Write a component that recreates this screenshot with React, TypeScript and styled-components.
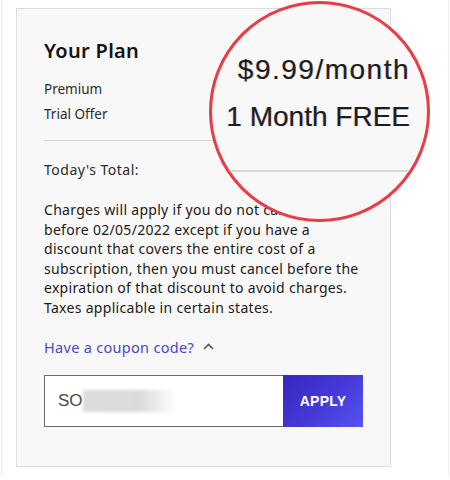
import React from "react";
import styled, { createGlobalStyle } from "styled-components";

const Global = createGlobalStyle`
  html, body { margin: 0; padding: 0; background: #ffffff; }
  body { font-family: "Noto Sans", "Lato", sans-serif; }
  * { box-sizing: border-box; }
`;

const Frame = styled.div`
  position: relative;
  margin-left: 1px;
  width: 448px;
  height: 476px;
  border-left: 1px solid #ececec;
  border-right: 1px solid #ececec;
  padding: 8px 0 0 14px;
`;

const Card = styled.section`
  width: 375px;
  height: 459px;
  background: #f8f8f8;
  border: 1px solid #dcdcdc;
  padding: 30px 27px 0 27px;
  display: flex;
  flex-direction: column;
  color: #1e1e1e;
`;

const Title = styled.h2`
  margin: 0;
  font-size: 20px;
  line-height: 24px;
  font-weight: 600;
  letter-spacing: 0.3px;
  color: #141414;
`;

const PlanList = styled.div`
  margin-top: 14px;
  display: flex;
  flex-direction: column;
`;

const PlanItem = styled.div`
  font-size: 13.5px;
  line-height: 25px;
  color: #2a2a2a;
`;

const Divider = styled.hr`
  margin: 13px 0 0 0;
  border: none;
  border-top: 1px solid #d6d6d6;
  width: 100%;
`;

const Total = styled.div`
  margin-top: 19px;
  font-size: 14px;
  letter-spacing: 0.5px;
  line-height: 20px;
  color: #2a2a2a;
`;

const Terms = styled.p`
  margin: 20px 0 0 0;
  font-size: 14px;
  letter-spacing: 0.3px;
  line-height: 19.6px;
  color: #1a1a1a;
  white-space: nowrap;
`;

const CouponToggle = styled.button`
  margin-top: 19px;
  align-self: flex-start;
  background: none;
  border: none;
  padding: 0;
  font-family: inherit;
  font-size: 14.5px;
  letter-spacing: 0.3px;
  line-height: 20px;
  color: #4a46c8;
  display: flex;
  align-items: center;
  gap: 9px;
  cursor: pointer;
`;

const CouponRow = styled.div`
  margin-top: 18px;
  display: flex;
  height: 52px;
`;

const CouponInput = styled.div`
  flex: 1;
  background: #ffffff;
  border: 1px solid #6b6b6b;
  border-right: none;
  display: flex;
  align-items: center;
  padding-left: 13px;
  font-family: "Liberation Sans", Arial, sans-serif;
  font-size: 17px;
  color: #4a4a4a;
`;

const Redacted = styled.span`
  display: inline-block;
  width: 94px;
  height: 22px;
  background: linear-gradient(90deg, #dcdcdc 0%, #dadada 60%, #ffffff 100%);
  filter: blur(1.5px);
`;

const ApplyButton = styled.button`
  width: 80px;
  border: none;
  background: linear-gradient(135deg, #3826c0 0%, #4438d6 50%, #5654f2 100%);
  color: #ffffff;
  font-family: "Liberation Sans", Arial, sans-serif;
  font-weight: 700;
  font-size: 14px;
  letter-spacing: 0.2px;
  cursor: pointer;
`;

const Magnifier = styled.div`
  position: absolute;
  left: 207px;
  top: 1px;
  width: 221px;
  height: 221px;
  border-radius: 50%;
  border: 3px solid #ec3b44;
  background: #f8f8f8;
  overflow: hidden;
  display: flex;
  flex-direction: column;
  align-items: flex-end;
  padding: 50px 17px 0 0;
  font-family: "Liberation Sans", Arial, sans-serif;
  color: #1c1c22;
  text-shadow: -0.6px 0 0 rgba(200, 150, 40, 0.35), 0.6px 0 0 rgba(60, 60, 200, 0.35);
`;

const ZoomLine = styled.div<{ $gap: number; $spacing?: number }>`
  margin-top: ${(p) => p.$gap}px;
  font-size: 28px;
  line-height: 32px;
  letter-spacing: ${(p) => p.$spacing ?? 0}px;
  white-space: nowrap;
`;

const ZoomRule = styled.div`
  margin-top: 37px;
  align-self: stretch;
  margin-right: -17px;
  border-top: 2px solid #d8d8d8;
`;

const Chevron = () => (
  <svg width="11" height="7" viewBox="0 0 11 7" fill="none">
    <path d="M1 6 L5.5 1.5 L10 6" stroke="#555" strokeWidth="1.6" />
  </svg>
);

const termsLines = [
  "Charges will apply if you do not cancel",
  "before 02/05/2022 except if you have a",
  "discount that covers the entire cost of a",
  "subscription, then you must cancel before the",
  "expiration of that discount to avoid charges.",
  "Taxes applicable in certain states.",
];

export default function App() {
  return (
    <>
      <Global />
      <Frame>
        <Card>
          <Title>Your Plan</Title>
          <PlanList>
            <PlanItem>Premium</PlanItem>
            <PlanItem>Trial Offer</PlanItem>
          </PlanList>
          <Divider />
          <Total>Today's Total:</Total>
          <Terms>
            {termsLines.map((line, i) => (
              <React.Fragment key={i}>
                {line}
                {i < termsLines.length - 1 && <br />}
              </React.Fragment>
            ))}
          </Terms>
          <CouponToggle type="button">
            Have a coupon code? <Chevron />
          </CouponToggle>
          <CouponRow>
            <CouponInput>
              SO<Redacted />
            </CouponInput>
            <ApplyButton type="button">APPLY</ApplyButton>
          </CouponRow>
        </Card>
        <Magnifier>
          <ZoomLine $gap={0} $spacing={1.5}>$9.99/month</ZoomLine>
          <ZoomLine $gap={15}>1 Month FREE</ZoomLine>
          <ZoomRule />
        </Magnifier>
      </Frame>
    </>
  );
}
